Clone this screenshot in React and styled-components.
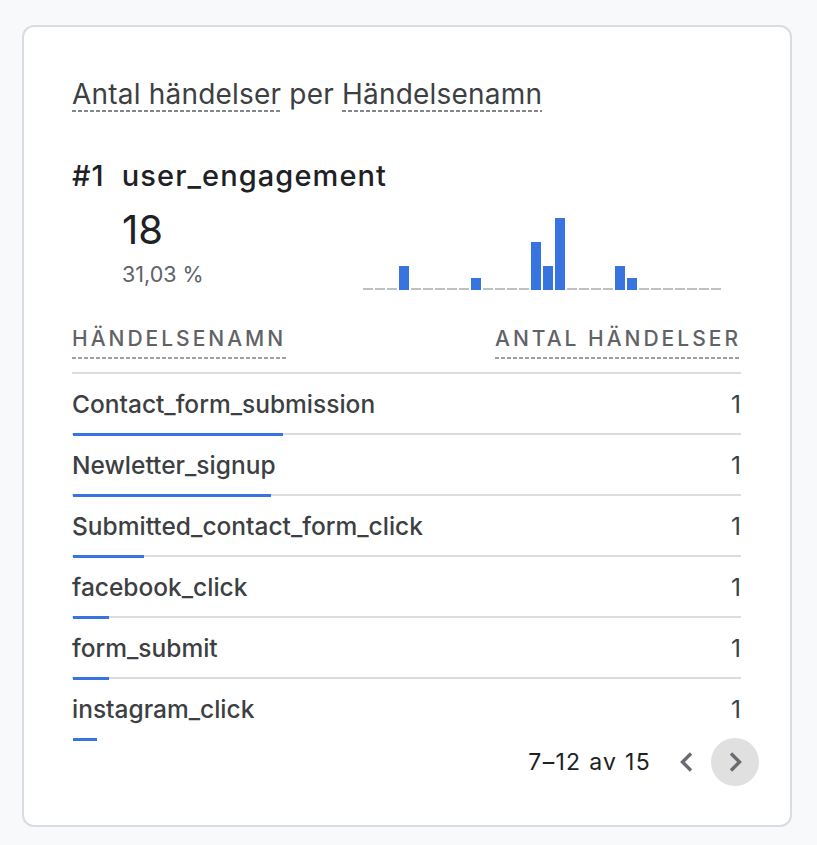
import styled, { createGlobalStyle } from "styled-components";

const GlobalStyle = createGlobalStyle`
  html, body {
    margin: 0;
    padding: 0;
    background: #f8f9fa;
  }
  body {
    font-family: Inter, Roboto, "Liberation Sans", Arial, sans-serif;
    color: #202124;
  }
`;

const chartData = [0, 0, 0, 2, 0, 0, 0, 0, 0, 1, 0, 0, 0, 0, 4, 2, 6, 0, 0, 0, 0, 2, 1, 0, 0, 0, 0, 0, 0, 0];

const rows = [
  { name: "Contact_form_submission", value: 1, bar: 210 },
  { name: "Newletter_signup", value: 1, bar: 198 },
  { name: "Submitted_contact_form_click", value: 1, bar: 71 },
  { name: "facebook_click", value: 1, bar: 36 },
  { name: "form_submit", value: 1, bar: 36 },
  { name: "instagram_click", value: 1, bar: 24, last: true },
];

const Page = styled.div`
  padding: 25px 25px 18px 22px;
`;

const Card = styled.div`
  box-sizing: border-box;
  width: 770px;
  height: 802px;
  background: #fff;
  border: 2px solid #dadce0;
  border-radius: 12px;
  padding: 49px 49px 0 48px;
`;

const Title = styled.div`
  font-size: 28px;
  line-height: 36px;
  letter-spacing: 0.2px;
  color: #3c4043;
`;

const Dashed = styled.span`
  padding-bottom: ${(p) => p.$pad || 1}px;
  background-image: linear-gradient(to right, ${(p) => p.$color || "#80868b"} 60%, transparent 60%);
  background-size: 6px 2px;
  background-repeat: repeat-x;
  background-position: left bottom;
`;

const RankHeader = styled.div`
  margin-top: 46px;
  display: flex;
  gap: 17px;
  font-size: 29px;
  line-height: 36px;
  letter-spacing: 1.1px;
  font-weight: 500;
  color: #202124;
`;

const StatRow = styled.div`
  display: flex;
  align-items: flex-end;
  padding-left: 50px;
  margin-top: 12px;
`;

const Stat = styled.div`
  width: 241px;
`;

const BigNumber = styled.div`
  font-size: 40px;
  line-height: 48px;
  color: #202124;
`;

const Percent = styled.div`
  margin-top: 4px;
  font-size: 21.5px;
  line-height: 32px;
  color: #5f6368;
`;

const Chart = styled.div`
  display: flex;
  align-items: flex-end;
  gap: 2px;
  height: 76px;
`;

const Bar = styled.div`
  width: 10px;
  background: ${(p) => (p.$empty ? "#bdc1c6" : "#3874e0")};
`;

const HeaderRow = styled.div`
  display: flex;
  justify-content: space-between;
  margin-top: 34px;
  padding-bottom: 18px;
  border-bottom: 2px solid #dadce0;
`;

const HeaderCell = styled.span`
  font-size: 21px;
  line-height: 30px;
  letter-spacing: 3px;
  font-weight: 500;
  color: #5f6368;
`;

const Row = styled.div`
  position: relative;
  display: flex;
  justify-content: space-between;
  align-items: center;
  height: 59px;
  border-bottom: 2px solid ${(p) => (p.$last ? "transparent" : "#dadce0")};
`;

const RowName = styled.span`
  font-size: 24.5px;
  font-weight: 500;
  color: #3c4043;
`;

const RowValue = styled.span`
  font-size: 24.5px;
  color: #3c4043;
`;

const RowBar = styled.div`
  position: absolute;
  left: 1px;
  bottom: -3px;
  height: 3px;
  background: #3874e0;
`;

const Pager = styled.div`
  display: flex;
  justify-content: flex-end;
  align-items: center;
  margin-right: -18px;
  margin-top: -2px;
`;

const PagerText = styled.span`
  font-size: 23px;
  letter-spacing: 1.3px;
  color: #202124;
  margin-right: 12px;
`;

const PagerButton = styled.button`
  width: 48px;
  height: 48px;
  border-radius: 50%;
  border: none;
  padding: 0;
  display: flex;
  align-items: center;
  justify-content: center;
  background: ${(p) => (p.$active ? "#e0e0e0" : "transparent")};
`;

const Chevron = ({ dir }) => (
  <svg width="24" height="24" viewBox="0 0 24 24">
    <path
      d={dir === "left" ? "M16 3.5 L7.5 12 L16 20.5" : "M8 3.5 L16.5 12 L8 20.5"}
      fill="none"
      stroke="#686b70"
      strokeWidth="3.4"
    />
  </svg>
);

export default function App() {
  return (
    <Page>
      <GlobalStyle />
      <Card>
        <Title>
          <Dashed>Antal händelser</Dashed> per <Dashed>Händelsenamn</Dashed>
        </Title>
        <RankHeader>
          <span>#1</span>
          <span>user_engagement</span>
        </RankHeader>
        <StatRow>
          <Stat>
            <BigNumber>18</BigNumber>
            <Percent>31,03 %</Percent>
          </Stat>
          <Chart>
            {chartData.map((v, i) => (
              <Bar key={i} $empty={v === 0} style={{ height: v === 0 ? 2 : v * 12 }} />
            ))}
          </Chart>
        </StatRow>
        <HeaderRow>
          <HeaderCell>
            <Dashed $color="#9aa0a6" $pad={8}>HÄNDELSENAMN</Dashed>
          </HeaderCell>
          <HeaderCell>
            <Dashed $color="#9aa0a6" $pad={8}>ANTAL HÄNDELSER</Dashed>
          </HeaderCell>
        </HeaderRow>
        {rows.map((r) => (
          <Row key={r.name} $last={r.last}>
            <RowName>{r.name}</RowName>
            <RowValue>{r.value}</RowValue>
            <RowBar style={{ width: r.bar }} />
          </Row>
        ))}
        <Pager>
          <PagerText>7–12 av 15</PagerText>
          <PagerButton>
            <Chevron dir="left" />
          </PagerButton>
          <PagerButton $active>
            <Chevron dir="right" />
          </PagerButton>
        </Pager>
      </Card>
    </Page>
  );
}
